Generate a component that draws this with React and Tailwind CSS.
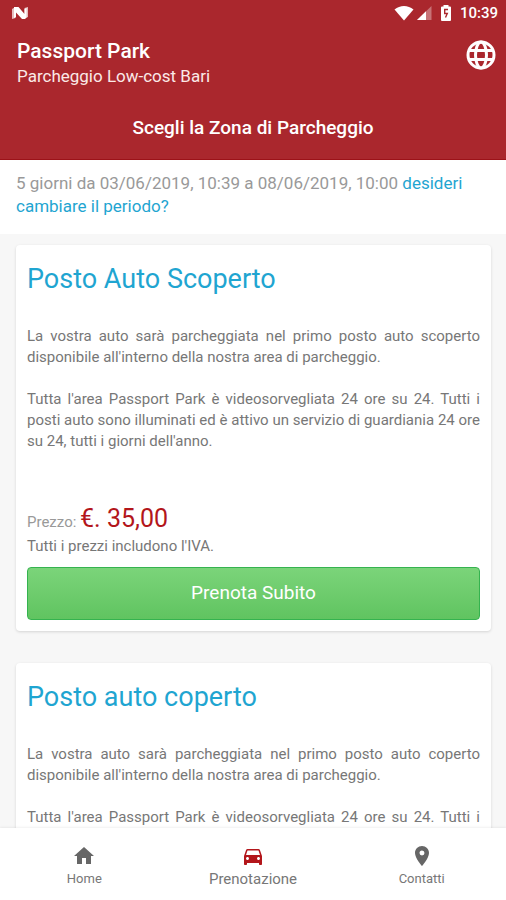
import { MdDirectionsCar, MdHome, MdPlace } from "react-icons/md";

const zones = [
  { title: "Posto Auto Scoperto", kind: "scoperto", price: "35,00" },
  { title: "Posto auto coperto", kind: "coperto", price: "45,00" },
];

function Globe() {
  return (
    <svg
      viewBox="0 0 34 34"
      className="size-[34px]"
      fill="none"
      stroke="currentColor"
      strokeWidth="3"
      aria-hidden="true"
    >
      <circle cx="17" cy="17" r="13" />
      <ellipse cx="17" cy="17" rx="5.500" ry="13" />
      <path d="M5 12.500h24M5 21.500h24" />
    </svg>
  );
}

function StatusBar() {
  return (
    <div className="flex h-[26px] items-center justify-between pr-2 pl-3">
      <svg viewBox="0 0 16 14" className="h-3.5 w-4 fill-white" aria-hidden="true">
        <path d="M0 3 3.500 1v11L0 13z" opacity=".7" />
        <path d="M12.500 2 16 1v10l-3.500 1.500z" opacity=".7" />
        <path d="M2 1h4.500l6 7V3l2-1v9.500L13 13h-3L4 6.500V11l-2 1z" />
      </svg>
      <div className="flex items-center">
        <svg viewBox="0 0 20 16" className="h-4 w-5 fill-white" aria-hidden="true">
          <path d="M.5 4.500C6-.2 14-.2 19.500 4.500L10 15.500z" />
        </svg>
        <svg viewBox="0 0 16 16" className="ml-0.5 h-4 w-4 fill-white" aria-hidden="true">
          <path d="M15.500 1v14H1z" opacity=".35" />
          <path d="M10 6.300V15H1z" />
        </svg>
        <svg viewBox="0 0 12 18" className="ml-2 h-4.5 w-3" aria-hidden="true">
          <path d="M3.500 1h5v1.500H10a1 1 0 0 1 1 1V16a1 1 0 0 1-1 1H2a1 1 0 0 1-1-1V3.500a1 1 0 0 1 1-1h1.500z" fill="#fff" />
          <path d="M8 5.500H4.700V9.500H7.300L5.500 13.500" fill="none" stroke="#aa272d" strokeWidth="1.400" />
        </svg>
        <span className="ml-2 text-[15px] leading-5 font-medium">10:39</span>
      </div>
    </div>
  );
}

function Zone({ title, kind, price }) {
  return (
    <article className="rounded bg-white px-[11px] pt-4 pb-[11px] shadow-[0_1px_3px_rgba(0,0,0,0.14)]">
      <h2 className="text-[27px] leading-9 text-[#1fa5d1]">{title}</h2>
      <div className="mt-[29px] flex flex-col gap-[21px] text-justify text-[15px] leading-[21px] text-[#777]">
        <p>
          La vostra auto sarà parcheggiata nel primo posto auto {kind} disponibile all'interno della
          nostra area di parcheggio.
        </p>
        <p>
          Tutta l'area Passport Park è videosorvegliata 24 ore su 24. Tutti i posti auto sono
          illuminati ed è attivo un servizio di guardiania 24 ore su 24, tutti i giorni dell'anno.
        </p>
      </div>
      <p className="mt-[53px] text-[15px] leading-7 text-[#999]">
        Prezzo: <span className="text-[25px] text-[#b3161b]">€. {price}</span>
      </p>
      <p className="text-[15px] leading-[21px] text-[#777]">Tutti i prezzi includono l'IVA.</p>
      <button
        type="button"
        className="mt-2.5 h-[53px] w-full rounded border border-[#35b34f] bg-linear-to-b from-[#7bd47a] to-[#60c460] text-[19px] text-white"
      >
        Prenota Subito
      </button>
    </article>
  );
}

function Tab({ icon: Icon, label, active }) {
  return (
    <a
      href="#"
      aria-current={active ? "page" : undefined}
      className="flex flex-1 flex-col items-center gap-px pt-4 text-[#777]"
    >
      <Icon className={active ? "size-6 text-[#b3161b]" : "size-6 text-[#666]"} aria-hidden="true" />
      <span className={active ? "text-[15px] leading-5" : "text-[13px] leading-5"}>{label}</span>
    </a>
  );
}

export default function App() {
  return (
    <div className="flex h-screen flex-col bg-[#f7f7f7] font-[Roboto,sans-serif]">
      <header className="shrink-0 border-b border-[#9c1218] bg-[#aa272d] pb-[17px] text-white">
        <StatusBar />
        <div className="flex items-center justify-between pt-3 pr-2 pl-[17px]">
          <div>
            <h1 className="text-[21px] leading-[26px] font-medium">Passport Park</h1>
            <p className="text-[17px] leading-6 text-[#fbe9e7]">Parcheggio Low-cost Bari</p>
          </div>
          <button type="button" aria-label="Lingua" className="self-start">
            <Globe />
          </button>
        </div>
        <p className="mt-[26px] text-center text-[19px] leading-7 font-medium">
          Scegli la Zona di Parcheggio
        </p>
      </header>

      <main className="min-h-0 flex-1 overflow-y-auto [scrollbar-width:none]">
        <p className="bg-white px-4 pt-3 pb-4 text-[17px] leading-[23px] text-[#999]">
          5 giorni da 03/06/2019, 10:39 a 08/06/2019, 10:00{" "}
          <a href="#" className="text-[#1fa5d1]">
            desideri cambiare il periodo?
          </a>
        </p>
        <div className="flex flex-col gap-8 py-[11px] pr-[15px] pl-4">
          {zones.map((zone) => (
            <Zone key={zone.kind} {...zone} />
          ))}
        </div>
      </main>

      <nav className="flex h-[72px] shrink-0 bg-white shadow-[0_-1px_2px_rgba(0,0,0,0.06)]">
        <Tab icon={MdHome} label="Home" />
        <Tab icon={MdDirectionsCar} label="Prenotazione" active />
        <Tab icon={MdPlace} label="Contatti" />
      </nav>
    </div>
  );
}
